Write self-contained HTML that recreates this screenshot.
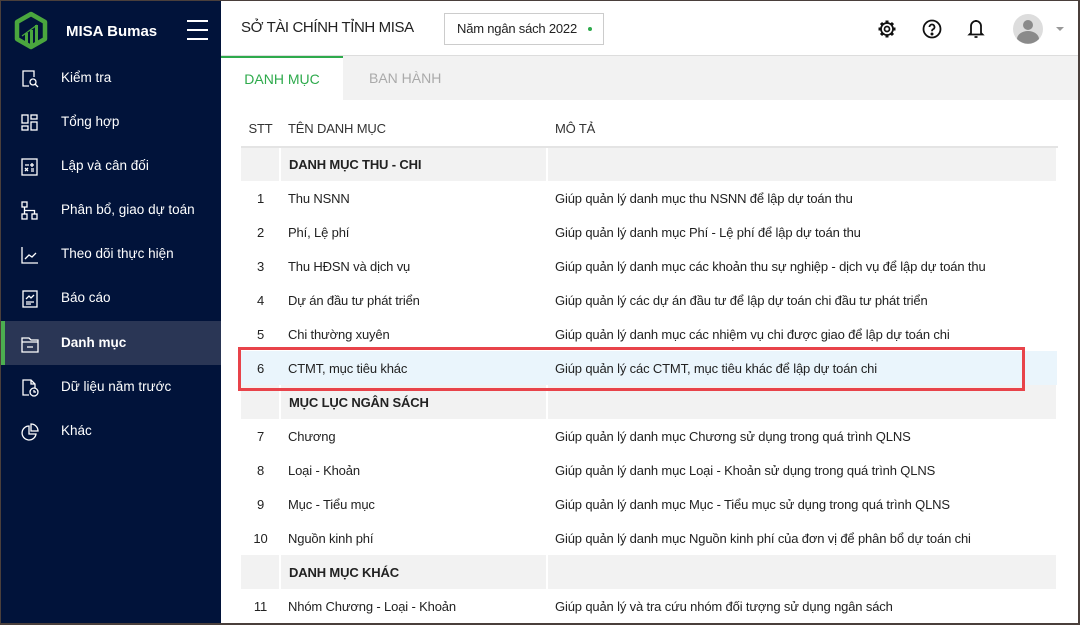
<!DOCTYPE html>
<html><head><meta charset="utf-8"><style>
*{box-sizing:border-box;margin:0;padding:0}
body{width:1080px;height:625px;overflow:hidden;font-family:"Liberation Sans",sans-serif;background:#4a3f3b;position:relative}
#app{position:absolute;left:1px;top:1px;width:1077px;height:622px;background:#fff;overflow:hidden}
#side{position:absolute;left:0;top:0;width:220px;height:622px;background:#01133a;color:#fff}
.logo{position:absolute;left:10px;top:9px}
.brand{position:absolute;left:65px;top:22px;font-weight:bold;font-size:15px}
.ham{position:absolute;left:186px;top:19px;width:21px}
.ham i{display:block;height:2px;background:#fff;margin-bottom:7px}
.item{position:absolute;left:0;width:220px;height:44px;font-size:13.5px;line-height:44px}
.item span{position:absolute;left:60px}
.item svg{position:absolute;left:19px;top:13px}
.item.act{background:#2a3655;font-weight:bold}
.item.act:before{content:"";position:absolute;left:0;top:0;width:4px;height:44px;background:#4caf50}
#head{position:absolute;left:220px;top:0;right:0;height:55px;border-bottom:1px solid #ddd}
.org{position:absolute;left:20px;top:18px;font-size:15px;color:#222;letter-spacing:-0.4px}
.year{position:absolute;left:223px;top:12px;width:160px;height:32px;border:1px solid #ccc;font-size:13px;line-height:30px;padding-left:12px;color:#222;letter-spacing:-0.2px}
.year b{position:absolute;left:143px;top:13px;width:4px;height:4px;border-radius:50%;background:#2eaa4c}
#tabs{position:absolute;left:220px;top:55px;right:0;height:44px;background:#f2f2f2}
.t1{position:absolute;left:0;top:0;width:122px;height:44px;background:#fff;border-top:2px solid #2eaa4c;color:#2eaa4c;font-size:14px;line-height:42px;text-align:center}
.t2{position:absolute;left:148px;top:0;font-size:14px;line-height:44px;color:#aaa}
table{position:absolute;left:240px;top:110px;width:817px;border-collapse:collapse;font-size:13px;color:#222;letter-spacing:-0.15px}
td{height:34px;padding:0 8px;white-space:nowrap}
td:first-child{width:39px;text-align:center;padding:0}
td:nth-child(2){width:267px}
thead td{height:36px;border-bottom:2px solid #e4e4e4;color:#333}
tr.g td{background:#f2f2f2;font-weight:bold;border-right:2px solid #fff}
tr.s td{background:#eaf5fc}
.red{position:absolute;left:237px;top:346px;width:787px;height:44px;border:3px solid #e8434a}
</style></head><body><div id="app">
<div id="side">
<svg class="logo" width="40" height="40" viewBox="0 0 40 40"><path d="M20 4 L34 12 V29 L20 37 L6 29 V12 Z" fill="none" stroke="#4aa63e" stroke-width="4.5" stroke-linejoin="round"/><rect x="14" y="23" width="3" height="11" fill="#4aa63e"/><rect x="19" y="20" width="3" height="15" fill="#4aa63e"/><rect x="24" y="15" width="3" height="18" fill="#4aa63e"/><path d="M11 26 L26 15" stroke="#4aa63e" stroke-width="1.2"/></svg>
<div class="brand">MISA Bumas</div>
<div class="ham"><i></i><i></i><i></i></div>
<div class="item" style="top:55px"><svg width="20" height="20" fill="none" stroke="#fff" stroke-width="1.3"><path d="M9 17H3V2h11v6"/><circle cx="13" cy="13" r="3"/><path d="M15 15l3 3"/></svg><span>Kiểm tra</span></div>
<div class="item" style="top:99px"><svg width="20" height="20" fill="none" stroke="#fff" stroke-width="1.3"><rect x="2" y="2" width="6" height="8"/><rect x="11" y="2" width="6" height="4"/><rect x="2" y="13" width="6" height="4"/><rect x="11" y="9" width="6" height="8"/></svg><span>Tổng hợp</span></div>
<div class="item" style="top:143px"><svg width="20" height="20" fill="none" stroke="#fff" stroke-width="1.3"><rect x="2" y="2" width="15" height="16"/><path d="M5 8h4M12 6v4M10 8h4M5 11l3 3M8 11l-3 3M11 12h3M11 14h3"/></svg><span>Lập và cân đối</span></div>
<div class="item" style="top:187px"><svg width="20" height="20" fill="none" stroke="#fff" stroke-width="1.3"><rect x="2" y="1" width="5" height="5"/><rect x="2" y="13" width="5" height="5"/><rect x="12" y="13" width="5" height="5"/><path d="M4.5 6v7M4.5 9.5h10V13"/></svg><span>Phân bổ, giao dự toán</span></div>
<div class="item" style="top:231px"><svg width="20" height="20" fill="none" stroke="#fff" stroke-width="1.3"><path d="M2 2v16h16M5 14l4-4 3 2 4-4"/></svg><span>Theo dõi thực hiện</span></div>
<div class="item" style="top:275px"><svg width="20" height="20" fill="none" stroke="#fff" stroke-width="1.3"><rect x="3" y="2" width="14" height="16"/><path d="M6 10l3-3 2 2 3-3M6 13h8M6 15h5"/></svg><span>Báo cáo</span></div>
<div class="item act" style="top:320px"><svg width="20" height="20" fill="none" stroke="#fff" stroke-width="1.3"><path d="M2 4h7l2 2h7v12H2z M2 8h16M7 13h6"/></svg><span>Danh mục</span></div>
<div class="item" style="top:364px"><svg width="20" height="20" fill="none" stroke="#fff" stroke-width="1.3"><path d="M9 17H3V2h8l4 4v4M11 2v4h4"/><circle cx="14" cy="14" r="4"/><path d="M14 12v2h2"/></svg><span>Dữ liệu năm trước</span></div>
<div class="item" style="top:408px"><svg width="20" height="20" fill="none" stroke="#fff" stroke-width="1.3"><path d="M9 4a7 7 0 1 0 7 8H9z"/><path d="M11 2a7 7 0 0 1 7 7h-7z"/></svg><span>Khác</span></div>
</div>
<div id="head">
<div class="org">SỞ TÀI CHÍNH TỈNH MISA</div>
<div class="year">Năm ngân sách 2022<b></b></div>
<svg style="position:absolute;left:656px;top:18px" width="20" height="20" viewBox="0 0 20 20" fill="none" stroke="#111" stroke-width="1.7"><circle cx="10" cy="10" r="6"/><circle cx="10" cy="10" r="2.5"/><g stroke-width="3" stroke-linecap="butt"><path d="M10 1.5v2.5M10 16v2.5M1.5 10h2.5M16 10h2.5M4 4l1.8 1.8M14.2 14.2L16 16M4 16l1.8-1.8M14.2 5.8L16 4"/></g></svg>
<svg style="position:absolute;left:701px;top:18px" width="20" height="20" fill="none" stroke="#111" stroke-width="1.8"><circle cx="10" cy="10" r="8.5"/><path d="M7.5 8a2.5 2.5 0 1 1 3.5 2.3c-.8.4-1 1-1 2"/><circle cx="10" cy="15" r=".6" fill="#111"/></svg>
<svg style="position:absolute;left:746px;top:17px" width="18" height="22" fill="none" stroke="#111" stroke-width="1.8"><path d="M4 15V8a5 5 0 0 1 10 0v7l1.5 1.5h-13zM7.5 19h3"/><path d="M9 2v1"/></svg>
<svg style="position:absolute;left:791px;top:12px" width="32" height="32"><circle cx="16" cy="16" r="15" fill="#ddd"/><circle cx="16" cy="12" r="5" fill="#8a8a8a"/><path d="M5 26a11 8 0 0 1 22 0a15 15 0 0 1-22 0z" fill="#8a8a8a"/></svg>
<div style="position:absolute;left:835px;top:26px;border:4px solid transparent;border-top:4px solid #999;border-bottom:0"></div>
</div>
<div id="tabs"><div class="t1">DANH MỤC</div><div class="t2">BAN HÀNH</div></div>
<table>
<thead><tr><td>STT</td><td>TÊN DANH MỤC</td><td>MÔ TẢ</td></tr></thead>
<tr class="g"><td></td><td>DANH MỤC THU - CHI</td><td></td></tr>
<tr><td>1</td><td>Thu NSNN</td><td>Giúp quản lý danh mục thu NSNN để lập dự toán thu</td></tr>
<tr><td>2</td><td>Phí, Lệ phí</td><td>Giúp quản lý danh mục Phí - Lệ phí để lập dự toán thu</td></tr>
<tr><td>3</td><td>Thu HĐSN và dịch vụ</td><td>Giúp quản lý danh mục các khoản thu sự nghiệp - dịch vụ để lập dự toán thu</td></tr>
<tr><td>4</td><td>Dự án đầu tư phát triển</td><td>Giúp quản lý các dự án đầu tư để lập dự toán chi đầu tư phát triển</td></tr>
<tr><td>5</td><td>Chi thường xuyên</td><td>Giúp quản lý danh mục các nhiệm vụ chi được giao để lập dự toán chi</td></tr>
<tr class="s"><td>6</td><td>CTMT, mục tiêu khác</td><td>Giúp quản lý các CTMT, mục tiêu khác để lập dự toán chi</td></tr>
<tr class="g"><td></td><td>MỤC LỤC NGÂN SÁCH</td><td></td></tr>
<tr><td>7</td><td>Chương</td><td>Giúp quản lý danh mục Chương sử dụng trong quá trình QLNS</td></tr>
<tr><td>8</td><td>Loại - Khoản</td><td>Giúp quản lý danh mục Loại - Khoản sử dụng trong quá trình QLNS</td></tr>
<tr><td>9</td><td>Mục - Tiểu mục</td><td>Giúp quản lý danh mục Mục - Tiểu mục sử dụng trong quá trình QLNS</td></tr>
<tr><td>10</td><td>Nguồn kinh phí</td><td>Giúp quản lý danh mục Nguồn kinh phí của đơn vị để phân bổ dự toán chi</td></tr>
<tr class="g"><td></td><td>DANH MỤC KHÁC</td><td></td></tr>
<tr><td>11</td><td>Nhóm Chương - Loại - Khoản</td><td>Giúp quản lý và tra cứu nhóm đối tượng sử dụng ngân sách</td></tr>
</table>
<div class="red"></div>
</div></body></html>
